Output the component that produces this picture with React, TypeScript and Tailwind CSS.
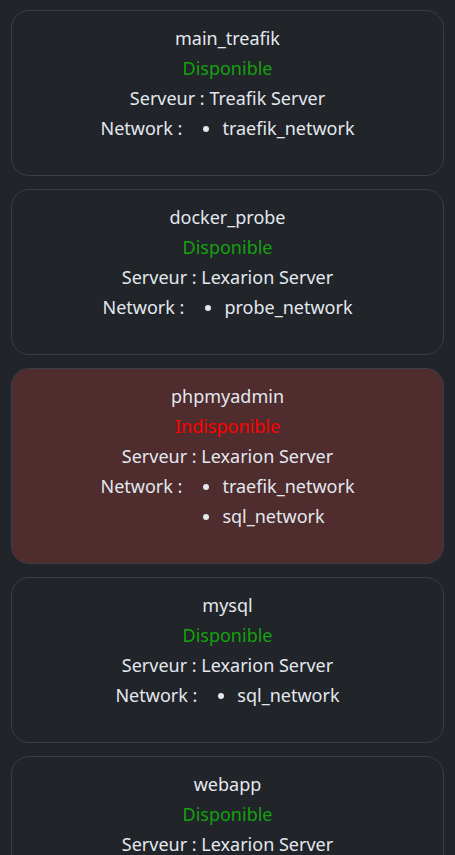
import React from 'react';

const containers = [
  { name: 'main_treafik', up: true, server: 'Treafik Server', networks: ['traefik_network'] },
  { name: 'docker_probe', up: true, server: 'Lexarion Server', networks: ['probe_network'] },
  { name: 'phpmyadmin', up: false, server: 'Lexarion Server', networks: ['traefik_network', 'sql_network'] },
  { name: 'mysql', up: true, server: 'Lexarion Server', networks: ['sql_network'] },
  { name: 'webapp', up: true, server: 'Lexarion Server', networks: ['webapp_network'] }
];

const ContainerCard = ({ name, up, server, networks }: (typeof containers)[0]) => (
  <div
    className={`flex flex-col items-center border border-[#3a3e46] rounded-[18px] pt-[12px] pb-[32px] text-[18px] leading-[30px] text-[#e3e8ef] ${
      up ? 'bg-[#212429]' : 'bg-[#4f2c2d]'
    }`}
  >
    <p>{name}</p>
    <p className={up ? 'text-[#13a10e]' : 'text-[#ff0000]'}>{up ? 'Disponible' : 'Indisponible'}</p>
    <p>Serveur : {server}</p>
    <div className="flex">
      <span>Network :</span>
      <ul className="list-disc pl-10">
        {networks.map((n) => (
          <li key={n}>{n}</li>
        ))}
      </ul>
    </div>
  </div>
);

export default function App() {
  return (
    <div className="h-[855px] overflow-hidden bg-[#212429] px-[11px] pt-[10px] flex flex-col gap-[13px] font-['Noto_Sans',sans-serif]">
      {containers.map((c) => (
        <ContainerCard key={c.name} {...c} />
      ))}
    </div>
  );
}
